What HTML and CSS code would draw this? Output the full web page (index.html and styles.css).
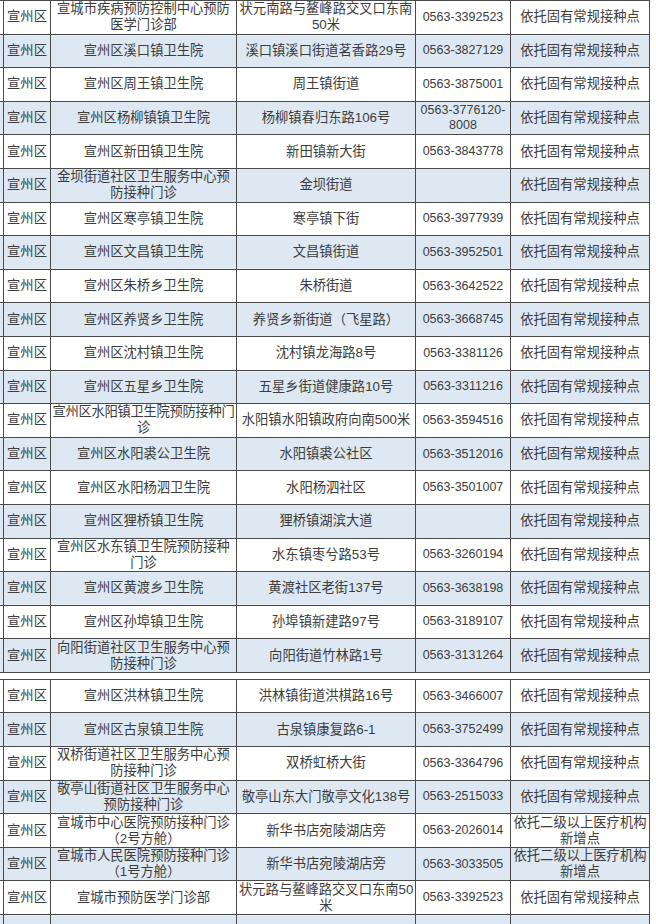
FILE: index.html
```html
<!DOCTYPE html>
<html lang="zh-CN">
<head>
<meta charset="utf-8">
<title>宣州区接种点</title>
<link rel="stylesheet" href="styles.css">
</head>
<body>
<div class="sheet">
<table class="grid first">
<colgroup><col class="c0"><col class="c1"><col class="c2"><col class="c3"><col class="c4"><col class="c5"></colgroup>
<tbody>
<tr><td></td><td>宣州区</td><td>宣城市疾病预防控制中心预防<br>医学门诊部</td><td>状元南路与鳌峰路交叉口东南<br>50米</td><td class="tel">0563-3392523</td><td>依托固有常规接种点</td></tr>
<tr class="alt"><td></td><td>宣州区</td><td>宣州区溪口镇卫生院</td><td>溪口镇溪口街道茗香路29号</td><td class="tel">0563-3827129</td><td>依托固有常规接种点</td></tr>
<tr><td></td><td>宣州区</td><td>宣州区周王镇卫生院</td><td>周王镇街道</td><td class="tel">0563-3875001</td><td>依托固有常规接种点</td></tr>
<tr class="alt"><td></td><td>宣州区</td><td>宣州区杨柳镇镇卫生院</td><td>杨柳镇春归东路106号</td><td class="tel">0563-3776120-<br>8008</td><td>依托固有常规接种点</td></tr>
<tr><td></td><td>宣州区</td><td>宣州区新田镇卫生院</td><td>新田镇新大街</td><td class="tel">0563-3843778</td><td>依托固有常规接种点</td></tr>
<tr class="alt"><td></td><td>宣州区</td><td>金坝街道社区卫生服务中心预<br>防接种门诊</td><td>金坝街道</td><td class="tel"></td><td>依托固有常规接种点</td></tr>
<tr><td></td><td>宣州区</td><td>宣州区寒亭镇卫生院</td><td>寒亭镇下街</td><td class="tel">0563-3977939</td><td>依托固有常规接种点</td></tr>
<tr class="alt"><td></td><td>宣州区</td><td>宣州区文昌镇卫生院</td><td>文昌镇街道</td><td class="tel">0563-3952501</td><td>依托固有常规接种点</td></tr>
<tr><td></td><td>宣州区</td><td>宣州区朱桥乡卫生院</td><td>朱桥街道</td><td class="tel">0563-3642522</td><td>依托固有常规接种点</td></tr>
<tr class="alt"><td></td><td>宣州区</td><td>宣州区养贤乡卫生院</td><td>养贤乡新街道（飞星路）</td><td class="tel">0563-3668745</td><td>依托固有常规接种点</td></tr>
<tr><td></td><td>宣州区</td><td>宣州区沈村镇卫生院</td><td>沈村镇龙海路8号</td><td class="tel">0563-3381126</td><td>依托固有常规接种点</td></tr>
<tr class="alt"><td></td><td>宣州区</td><td>宣州区五星乡卫生院</td><td>五星乡街道健康路10号</td><td class="tel">0563-3311216</td><td>依托固有常规接种点</td></tr>
<tr><td></td><td>宣州区</td><td class="tight">宣州区水阳镇卫生院预防接种门<br>诊</td><td>水阳镇水阳镇政府向南500米</td><td class="tel">0563-3594516</td><td>依托固有常规接种点</td></tr>
<tr class="alt"><td></td><td>宣州区</td><td>宣州区水阳裘公卫生院</td><td>水阳镇裘公社区</td><td class="tel">0563-3512016</td><td>依托固有常规接种点</td></tr>
<tr><td></td><td>宣州区</td><td>宣州区水阳杨泗卫生院</td><td>水阳杨泗社区</td><td class="tel">0563-3501007</td><td>依托固有常规接种点</td></tr>
<tr class="alt"><td></td><td>宣州区</td><td>宣州区狸桥镇卫生院</td><td>狸桥镇湖滨大道</td><td class="tel"></td><td>依托固有常规接种点</td></tr>
<tr><td></td><td>宣州区</td><td>宣州区水东镇卫生院预防接种<br>门诊</td><td>水东镇枣兮路53号</td><td class="tel">0563-3260194</td><td>依托固有常规接种点</td></tr>
<tr class="alt"><td></td><td>宣州区</td><td>宣州区黄渡乡卫生院</td><td>黄渡社区老街137号</td><td class="tel">0563-3638198</td><td>依托固有常规接种点</td></tr>
<tr><td></td><td>宣州区</td><td>宣州区孙埠镇卫生院</td><td>孙埠镇新建路97号</td><td class="tel">0563-3189107</td><td>依托固有常规接种点</td></tr>
<tr class="alt"><td></td><td>宣州区</td><td>向阳街道社区卫生服务中心预<br>防接种门诊</td><td>向阳街道竹林路1号</td><td class="tel">0563-3131264</td><td>依托固有常规接种点</td></tr>
</tbody>
</table>
<table class="grid second">
<colgroup><col class="c0"><col class="c1"><col class="c2"><col class="c3"><col class="c4"><col class="c5"></colgroup>
<tbody>
<tr><td></td><td>宣州区</td><td>宣州区洪林镇卫生院</td><td>洪林镇街道洪棋路16号</td><td class="tel">0563-3466007</td><td>依托固有常规接种点</td></tr>
<tr class="alt"><td></td><td>宣州区</td><td>宣州区古泉镇卫生院</td><td>古泉镇康复路6-1</td><td class="tel">0563-3752499</td><td>依托固有常规接种点</td></tr>
<tr><td></td><td>宣州区</td><td>双桥街道社区卫生服务中心预<br>防接种门诊</td><td>双桥虹桥大街</td><td class="tel">0563-3364796</td><td>依托固有常规接种点</td></tr>
<tr class="alt"><td></td><td>宣州区</td><td>敬亭山街道社区卫生服务中心<br>预防接种门诊</td><td>敬亭山东大门敬亭文化138号</td><td class="tel">0563-2515033</td><td>依托固有常规接种点</td></tr>
<tr><td></td><td>宣州区</td><td>宣城市中心医院预防接种门诊<br>（2号方舱）</td><td>新华书店宛陵湖店旁</td><td class="tel">0563-2026014</td><td>依托二级以上医疗机构<br>新增点</td></tr>
<tr class="alt"><td></td><td>宣州区</td><td>宣城市人民医院预防接种门诊<br>（1号方舱）</td><td>新华书店宛陵湖店旁</td><td class="tel">0563-3033505</td><td>依托二级以上医疗机构<br>新增点</td></tr>
<tr><td></td><td>宣州区</td><td>宣城市预防医学门诊部</td><td>状元路与鳌峰路交叉口东南50<br>米</td><td class="tel">0563-3392523</td><td>依托固有常规接种点</td></tr>
<tr class="alt"><td></td><td></td><td></td><td></td><td class="tel"></td><td></td></tr>
</tbody>
</table>
</div>
</body>
</html>
```

FILE: styles.css
```css
html, body {
  margin: 0;
  padding: 0;
  background: #ffffff;
  overflow: hidden;
}

body {
  width: 656px;
  height: 924px;
}

.sheet {
  display: flex;
  flex-direction: column;
  gap: 6px;
  margin-left: -1px;
}

.grid {
  border-collapse: collapse;
  table-layout: fixed;
  width: 651px;
  font-family: "Liberation Sans", "Noto Sans CJK SC", sans-serif;
  font-size: 13.3px;
  line-height: 16px;
  color: #3c3c3c;
}

.grid td {
  border: 1px solid #4a4a4a;
  padding: 0 2px;
  text-align: center;
  vertical-align: middle;
  white-space: nowrap;
  overflow: hidden;
  background: #ffffff;
}

.grid td:first-child {
  padding: 0;
}

.grid td.tight {
  padding: 0;
  letter-spacing: -0.3px;
}

.grid tr {
  height: 33.6px;
}

.grid tr.alt td {
  background: #dde8f3;
}

.c0 { width: 4px; }
.c1 { width: 47px; }
.c2 { width: 186px; }
.c3 { width: 179px; }
.c4 { width: 95px; }
.c5 { width: 139px; }

.grid td.tel {
  font-size: 12.5px;
  line-height: 15px;
}
```
